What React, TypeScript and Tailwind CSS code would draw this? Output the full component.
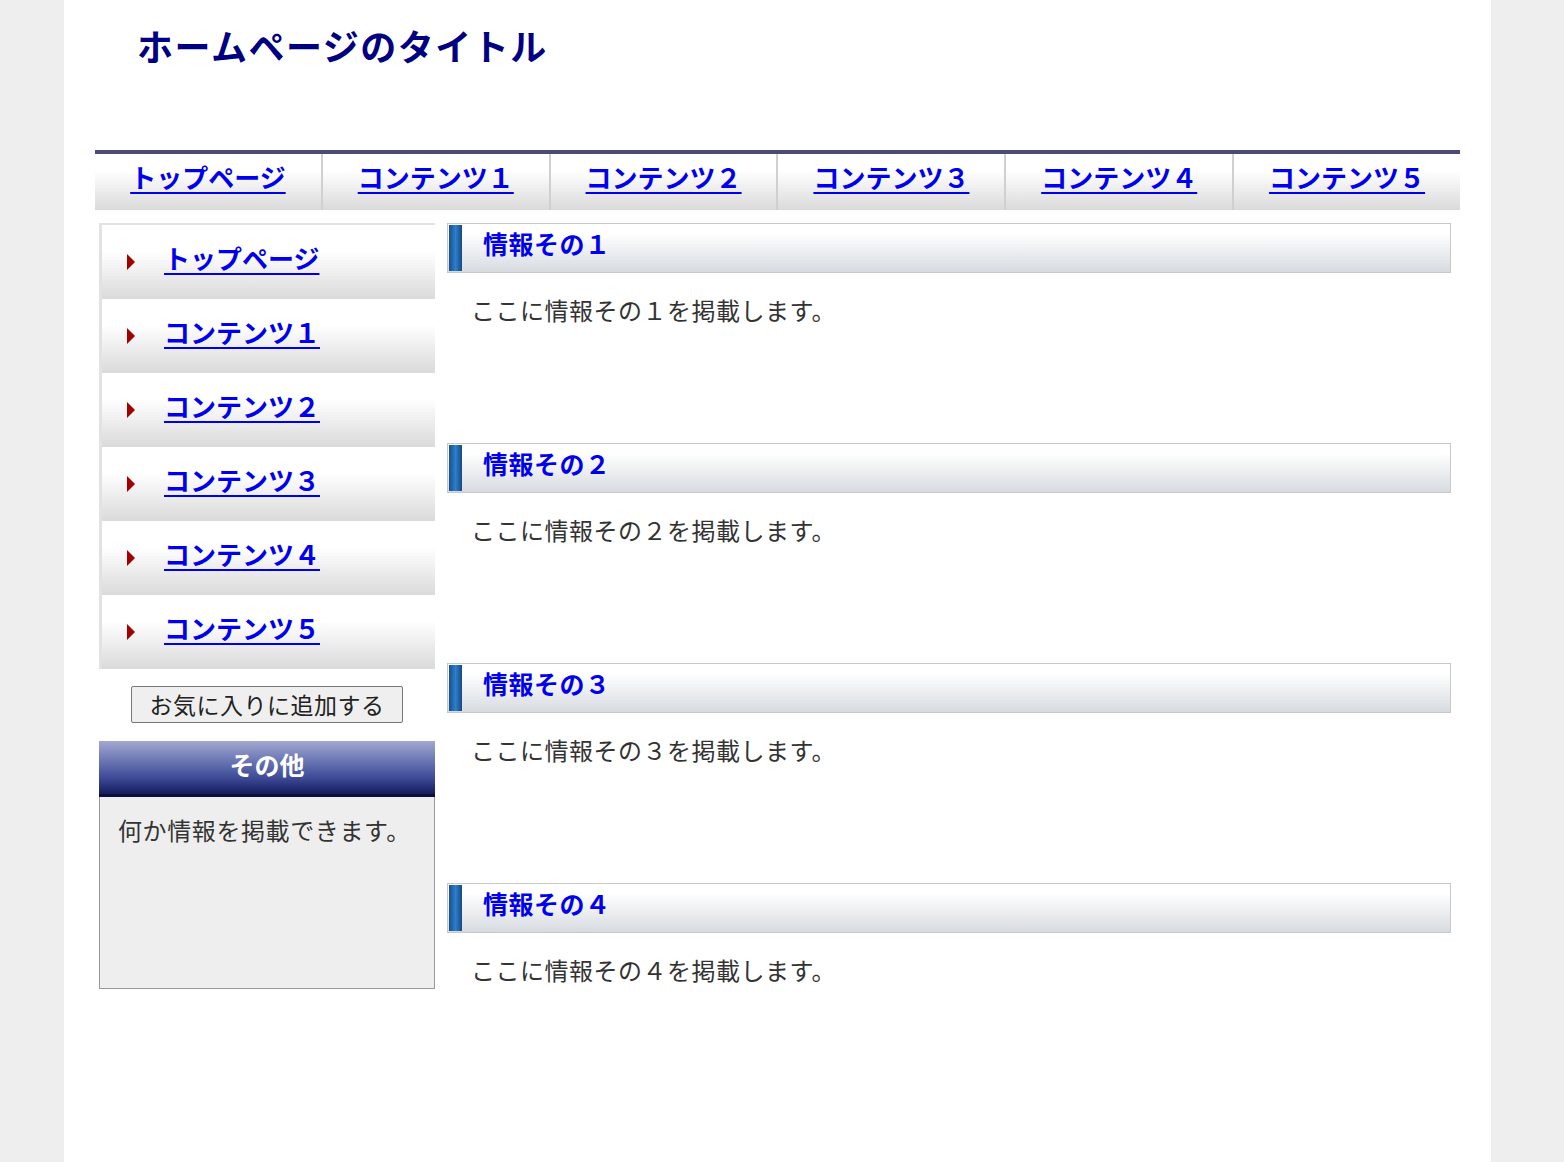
const font = { fontFamily: '"Noto Sans CJK JP", "Noto Sans", sans-serif' };

const navItems = ["トップページ", "コンテンツ１", "コンテンツ２", "コンテンツ３", "コンテンツ４", "コンテンツ５"];
const infos = ["１", "２", "３", "４"];

export default function App() {
  return (
    <div className="min-h-[1162px] bg-[#eeeeee]" style={font}>
      <div className="ml-[64px] w-[1427px] min-h-[1162px] bg-white px-[31px]">
        <header className="h-[150px] pl-[42px] pt-[19px]">
          <h1 className="text-[36px] font-bold leading-[52px] text-[#000080] tracking-[1.5px]">
            ホームページのタイトル
          </h1>
        </header>

        <nav className="flex h-[60px] border-t-[4px] border-[#4b4b78]">
          {navItems.map((n, i) => (
            <div
              key={n}
              className={`flex flex-1 items-center justify-center bg-gradient-to-b from-white from-30% to-[#dadada] ${
                i < navItems.length - 1 ? "border-r-2 border-[#d0d0d0]" : ""
              }`}
            >
              <a href="#" className="-mt-[10px] text-[26px] font-bold leading-none text-[#0000ee] underline underline-offset-[4px] decoration-2">
                {n}
              </a>
            </div>
          ))}
        </nav>

        <div className="mt-[13px] flex items-start gap-[12px] pl-[4px]">
          <aside className="w-[336px] shrink-0">
            <ul className="border-l-[3px] border-t-2 border-[#e2e2e2]">
              {navItems.map((n) => (
                <li key={n} className="flex h-[74px] items-center bg-gradient-to-b from-white from-35% to-[#dadada] pl-[25px]">
                  <span className="mr-[29px] h-0 w-0 border-y-[8px] border-l-[8px] border-y-transparent border-l-[#a00000]" />
                  <a href="#" className="-mt-[8px] text-[26px] font-bold leading-none text-[#0000ee] underline underline-offset-[4px] decoration-2">
                    {n}
                  </a>
                </li>
              ))}
            </ul>
            <div className="flex justify-center pt-[17px] pb-[18px]">
              <button className="h-[37px] w-[272px] rounded-[2px] border border-[#777] bg-[#efefef] text-[23px] leading-none tracking-[0.5px] text-[#222]">
                お気に入りに追加する
              </button>
            </div>
            <div className="flex h-[56px] items-center justify-center border-b-[3px] border-[#0a0f40] bg-gradient-to-b from-[#a3a8d2] via-[#3e4a96] via-70% to-[#141c5c] text-[25px] font-bold text-white">
              <span className="-mt-[6px]">その他</span>
            </div>
            <div className="h-[192px] border border-t-0 border-[#999] bg-[#eeeeee] px-[18px] pt-[16px] text-[24px] leading-[34px] tracking-[0.6px] text-[#333]">
              何か情報を掲載できます。
            </div>
          </aside>

          <main className="w-[1004px]">
            {infos.map((d) => (
              <section key={d} className="h-[220px]">
                <h2 className="flex h-[50px] items-center border border-[#c8c8c8] bg-gradient-to-b from-white from-20% to-[#d7dbe0]">
                  <span className="ml-[1px] h-[46px] w-[13px] bg-gradient-to-r from-[#1b4f8a] via-[#2a7fcf] to-[#174a80]" />
                  <span className="-mt-[8px] ml-[21px] text-[25px] font-bold tracking-[0.5px] text-[#0000ee]">情報その{d}</span>
                </h2>
                <p className="pl-[24px] pt-[20px] text-[24px] leading-[34px] tracking-[0.5px] text-[#333]">ここに情報その{d}を掲載します。</p>
              </section>
            ))}
          </main>
        </div>
      </div>
    </div>
  );
}
